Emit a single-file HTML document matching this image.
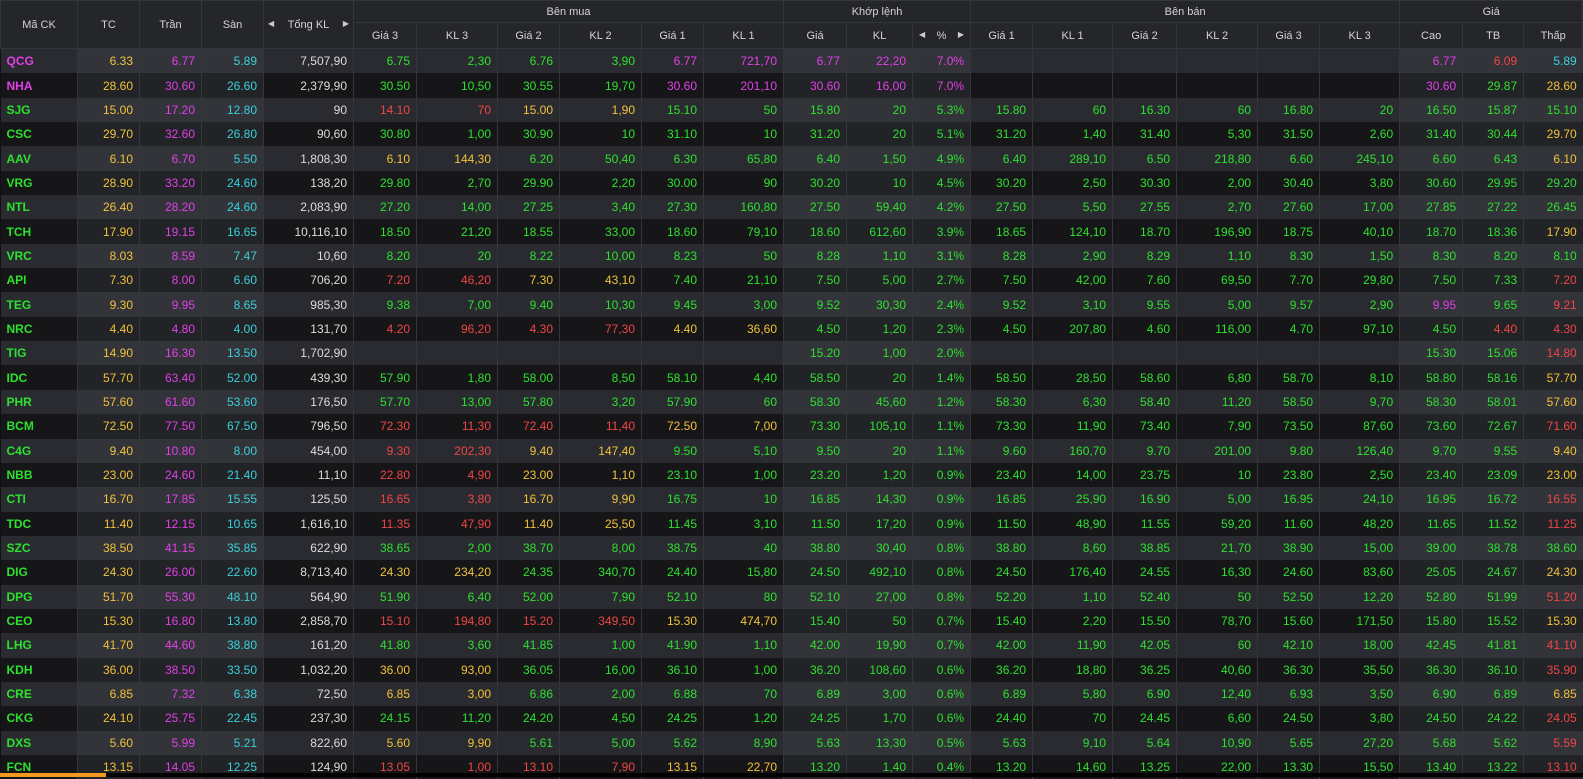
<!DOCTYPE html>
<html><head><meta charset="utf-8">
<style>
html,body{margin:0;padding:0;background:#111113;width:1583px;height:777px;overflow:hidden;font-family:"Liberation Sans",sans-serif}
table{border-collapse:collapse;table-layout:fixed;width:1583px;position:absolute;top:0;left:0}
th{background:#25262a;color:#d4d4d6;font-weight:normal;font-size:11px;border:1px solid #35363b;padding:0;text-align:center;white-space:nowrap}
thead tr.a th{height:21px}
thead tr.b th{height:25px}
tbody tr{height:24.35px}
tbody td{font-size:12px;text-align:right;padding:0 6px 0 0;height:24.35px;border-left:1px solid #35363b;color:#2ee02e;white-space:nowrap;overflow:hidden}
tbody tr:nth-child(odd) td{background:#2a2b30}
tbody tr:nth-child(even) td{background:#161618}
tbody tr:nth-child(odd) td:nth-child(2),tbody tr:nth-child(odd) td:nth-child(3),tbody tr:nth-child(odd) td:nth-child(4),
tbody tr:nth-child(odd) td:nth-child(12),tbody tr:nth-child(odd) td:nth-child(13),tbody tr:nth-child(odd) td:nth-child(14),
tbody tr:nth-child(odd) td:nth-child(21),tbody tr:nth-child(odd) td:nth-child(22),tbody tr:nth-child(odd) td:nth-child(23){background:#33343a}
tbody tr:nth-child(even) td:nth-child(2),tbody tr:nth-child(even) td:nth-child(3),tbody tr:nth-child(even) td:nth-child(4),
tbody tr:nth-child(even) td:nth-child(12),tbody tr:nth-child(even) td:nth-child(13),tbody tr:nth-child(even) td:nth-child(14),
tbody tr:nth-child(even) td:nth-child(21),tbody tr:nth-child(even) td:nth-child(22),tbody tr:nth-child(even) td:nth-child(23){background:#222327}
tbody td:first-child{text-align:left;padding-left:6px;font-weight:bold;border-left:none}
tbody td:nth-child(2){color:#f0c23a}
tbody td:nth-child(3){color:#e040e8}
tbody td:nth-child(4){color:#3ad0d8}
tbody td:nth-child(5){color:#dcdcdc}
td.y{color:#f0c23a!important}td.r{color:#f04545!important}td.p{color:#e040e8!important}td.c{color:#3ad0d8!important}
.arr{font-size:8px;color:#ccc}
.bar{position:absolute;left:0;top:773px;width:106px;height:4px;background:#f39a1e}
.blk{position:absolute;left:106px;top:773px;width:1477px;height:4px;background:#000}
</style></head><body>
<table>
<colgroup>
<col style="width:77px"><col style="width:62px"><col style="width:62px"><col style="width:62px"><col style="width:90px">
<col style="width:63px"><col style="width:81px"><col style="width:62px"><col style="width:82px"><col style="width:62px"><col style="width:80px">
<col style="width:63px"><col style="width:66px"><col style="width:58px">
<col style="width:62px"><col style="width:80px"><col style="width:64px"><col style="width:81px"><col style="width:62px"><col style="width:80px">
<col style="width:63px"><col style="width:61px"><col style="width:59px">
</colgroup>
<thead>
<tr class="a"><th rowspan="2">Mã CK</th><th rowspan="2">TC</th><th rowspan="2">Trần</th><th rowspan="2">Sàn</th><th rowspan="2"><span class="arr" style="float:left;margin-left:4px">◀</span>Tổng KL<span class="arr" style="float:right;margin-right:4px">▶</span></th><th colspan="6">Bên mua</th><th colspan="3">Khớp lệnh</th><th colspan="6">Bên bán</th><th colspan="3">Giá</th></tr>
<tr class="b"><th>Giá 3</th><th>KL 3</th><th>Giá 2</th><th>KL 2</th><th>Giá 1</th><th>KL 1</th><th>Giá</th><th>KL</th><th><span class="arr" style="float:left;margin-left:6px">◀</span>%<span class="arr" style="float:right;margin-right:6px">▶</span></th><th>Giá 1</th><th>KL 1</th><th>Giá 2</th><th>KL 2</th><th>Giá 3</th><th>KL 3</th><th>Cao</th><th>TB</th><th>Thấp</th></tr>
</thead>
<tbody>
<tr><td class="p">QCG</td><td>6.33</td><td>6.77</td><td>5.89</td><td>7,507,90</td><td>6.75</td><td>2,30</td><td>6.76</td><td>3,90</td><td class="p">6.77</td><td class="p">721,70</td><td class="p">6.77</td><td class="p">22,20</td><td class="p">7.0%</td><td></td><td></td><td></td><td></td><td></td><td></td><td class="p">6.77</td><td class="r">6.09</td><td class="c">5.89</td></tr>
<tr><td class="p">NHA</td><td>28.60</td><td>30.60</td><td>26.60</td><td>2,379,90</td><td>30.50</td><td>10,50</td><td>30.55</td><td>19,70</td><td class="p">30.60</td><td class="p">201,10</td><td class="p">30.60</td><td class="p">16,00</td><td class="p">7.0%</td><td></td><td></td><td></td><td></td><td></td><td></td><td class="p">30.60</td><td>29.87</td><td class="y">28.60</td></tr>
<tr><td>SJG</td><td>15.00</td><td>17.20</td><td>12.80</td><td>90</td><td class="r">14.10</td><td class="r">70</td><td class="y">15.00</td><td class="y">1,90</td><td>15.10</td><td>50</td><td>15.80</td><td>20</td><td>5.3%</td><td>15.80</td><td>60</td><td>16.30</td><td>60</td><td>16.80</td><td>20</td><td>16.50</td><td>15.87</td><td>15.10</td></tr>
<tr><td>CSC</td><td>29.70</td><td>32.60</td><td>26.80</td><td>90,60</td><td>30.80</td><td>1,00</td><td>30.90</td><td>10</td><td>31.10</td><td>10</td><td>31.20</td><td>20</td><td>5.1%</td><td>31.20</td><td>1,40</td><td>31.40</td><td>5,30</td><td>31.50</td><td>2,60</td><td>31.40</td><td>30.44</td><td class="y">29.70</td></tr>
<tr><td>AAV</td><td>6.10</td><td>6.70</td><td>5.50</td><td>1,808,30</td><td class="y">6.10</td><td class="y">144,30</td><td>6.20</td><td>50,40</td><td>6.30</td><td>65,80</td><td>6.40</td><td>1,50</td><td>4.9%</td><td>6.40</td><td>289,10</td><td>6.50</td><td>218,80</td><td>6.60</td><td>245,10</td><td>6.60</td><td>6.43</td><td class="y">6.10</td></tr>
<tr><td>VRG</td><td>28.90</td><td>33.20</td><td>24.60</td><td>138,20</td><td>29.80</td><td>2,70</td><td>29.90</td><td>2,20</td><td>30.00</td><td>90</td><td>30.20</td><td>10</td><td>4.5%</td><td>30.20</td><td>2,50</td><td>30.30</td><td>2,00</td><td>30.40</td><td>3,80</td><td>30.60</td><td>29.95</td><td>29.20</td></tr>
<tr><td>NTL</td><td>26.40</td><td>28.20</td><td>24.60</td><td>2,083,90</td><td>27.20</td><td>14,00</td><td>27.25</td><td>3,40</td><td>27.30</td><td>160,80</td><td>27.50</td><td>59,40</td><td>4.2%</td><td>27.50</td><td>5,50</td><td>27.55</td><td>2,70</td><td>27.60</td><td>17,00</td><td>27.85</td><td>27.22</td><td>26.45</td></tr>
<tr><td>TCH</td><td>17.90</td><td>19.15</td><td>16.65</td><td>10,116,10</td><td>18.50</td><td>21,20</td><td>18.55</td><td>33,00</td><td>18.60</td><td>79,10</td><td>18.60</td><td>612,60</td><td>3.9%</td><td>18.65</td><td>124,10</td><td>18.70</td><td>196,90</td><td>18.75</td><td>40,10</td><td>18.70</td><td>18.36</td><td class="y">17.90</td></tr>
<tr><td>VRC</td><td>8.03</td><td>8.59</td><td>7.47</td><td>10,60</td><td>8.20</td><td>20</td><td>8.22</td><td>10,00</td><td>8.23</td><td>50</td><td>8.28</td><td>1,10</td><td>3.1%</td><td>8.28</td><td>2,90</td><td>8.29</td><td>1,10</td><td>8.30</td><td>1,50</td><td>8.30</td><td>8.20</td><td>8.10</td></tr>
<tr><td>API</td><td>7.30</td><td>8.00</td><td>6.60</td><td>706,20</td><td class="r">7.20</td><td class="r">46,20</td><td class="y">7.30</td><td class="y">43,10</td><td>7.40</td><td>21,10</td><td>7.50</td><td>5,00</td><td>2.7%</td><td>7.50</td><td>42,00</td><td>7.60</td><td>69,50</td><td>7.70</td><td>29,80</td><td>7.50</td><td>7.33</td><td class="r">7.20</td></tr>
<tr><td>TEG</td><td>9.30</td><td>9.95</td><td>8.65</td><td>985,30</td><td>9.38</td><td>7,00</td><td>9.40</td><td>10,30</td><td>9.45</td><td>3,00</td><td>9.52</td><td>30,30</td><td>2.4%</td><td>9.52</td><td>3,10</td><td>9.55</td><td>5,00</td><td>9.57</td><td>2,90</td><td class="p">9.95</td><td>9.65</td><td class="r">9.21</td></tr>
<tr><td>NRC</td><td>4.40</td><td>4.80</td><td>4.00</td><td>131,70</td><td class="r">4.20</td><td class="r">96,20</td><td class="r">4.30</td><td class="r">77,30</td><td class="y">4.40</td><td class="y">36,60</td><td>4.50</td><td>1,20</td><td>2.3%</td><td>4.50</td><td>207,80</td><td>4.60</td><td>116,00</td><td>4.70</td><td>97,10</td><td>4.50</td><td class="r">4.40</td><td class="r">4.30</td></tr>
<tr><td>TIG</td><td>14.90</td><td>16.30</td><td>13.50</td><td>1,702,90</td><td></td><td></td><td></td><td></td><td></td><td></td><td>15.20</td><td>1,00</td><td>2.0%</td><td></td><td></td><td></td><td></td><td></td><td></td><td>15.30</td><td>15.06</td><td class="r">14.80</td></tr>
<tr><td>IDC</td><td>57.70</td><td>63.40</td><td>52.00</td><td>439,30</td><td>57.90</td><td>1,80</td><td>58.00</td><td>8,50</td><td>58.10</td><td>4,40</td><td>58.50</td><td>20</td><td>1.4%</td><td>58.50</td><td>28,50</td><td>58.60</td><td>6,80</td><td>58.70</td><td>8,10</td><td>58.80</td><td>58.16</td><td class="y">57.70</td></tr>
<tr><td>PHR</td><td>57.60</td><td>61.60</td><td>53.60</td><td>176,50</td><td>57.70</td><td>13,00</td><td>57.80</td><td>3,20</td><td>57.90</td><td>60</td><td>58.30</td><td>45,60</td><td>1.2%</td><td>58.30</td><td>6,30</td><td>58.40</td><td>11,20</td><td>58.50</td><td>9,70</td><td>58.30</td><td>58.01</td><td class="y">57.60</td></tr>
<tr><td>BCM</td><td>72.50</td><td>77.50</td><td>67.50</td><td>796,50</td><td class="r">72.30</td><td class="r">11,30</td><td class="r">72.40</td><td class="r">11,40</td><td class="y">72.50</td><td class="y">7,00</td><td>73.30</td><td>105,10</td><td>1.1%</td><td>73.30</td><td>11,90</td><td>73.40</td><td>7,90</td><td>73.50</td><td>87,60</td><td>73.60</td><td>72.67</td><td class="r">71.60</td></tr>
<tr><td>C4G</td><td>9.40</td><td>10.80</td><td>8.00</td><td>454,00</td><td class="r">9.30</td><td class="r">202,30</td><td class="y">9.40</td><td class="y">147,40</td><td>9.50</td><td>5,10</td><td>9.50</td><td>20</td><td>1.1%</td><td>9.60</td><td>160,70</td><td>9.70</td><td>201,00</td><td>9.80</td><td>126,40</td><td>9.70</td><td>9.55</td><td class="y">9.40</td></tr>
<tr><td>NBB</td><td>23.00</td><td>24.60</td><td>21.40</td><td>11,10</td><td class="r">22.80</td><td class="r">4,90</td><td class="y">23.00</td><td class="y">1,10</td><td>23.10</td><td>1,00</td><td>23.20</td><td>1,20</td><td>0.9%</td><td>23.40</td><td>14,00</td><td>23.75</td><td>10</td><td>23.80</td><td>2,50</td><td>23.40</td><td>23.09</td><td class="y">23.00</td></tr>
<tr><td>CTI</td><td>16.70</td><td>17.85</td><td>15.55</td><td>125,50</td><td class="r">16.65</td><td class="r">3,80</td><td class="y">16.70</td><td class="y">9,90</td><td>16.75</td><td>10</td><td>16.85</td><td>14,30</td><td>0.9%</td><td>16.85</td><td>25,90</td><td>16.90</td><td>5,00</td><td>16.95</td><td>24,10</td><td>16.95</td><td>16.72</td><td class="r">16.55</td></tr>
<tr><td>TDC</td><td>11.40</td><td>12.15</td><td>10.65</td><td>1,616,10</td><td class="r">11.35</td><td class="r">47,90</td><td class="y">11.40</td><td class="y">25,50</td><td>11.45</td><td>3,10</td><td>11.50</td><td>17,20</td><td>0.9%</td><td>11.50</td><td>48,90</td><td>11.55</td><td>59,20</td><td>11.60</td><td>48,20</td><td>11.65</td><td>11.52</td><td class="r">11.25</td></tr>
<tr><td>SZC</td><td>38.50</td><td>41.15</td><td>35.85</td><td>622,90</td><td>38.65</td><td>2,00</td><td>38.70</td><td>8,00</td><td>38.75</td><td>40</td><td>38.80</td><td>30,40</td><td>0.8%</td><td>38.80</td><td>8,60</td><td>38.85</td><td>21,70</td><td>38.90</td><td>15,00</td><td>39.00</td><td>38.78</td><td>38.60</td></tr>
<tr><td>DIG</td><td>24.30</td><td>26.00</td><td>22.60</td><td>8,713,40</td><td class="y">24.30</td><td class="y">234,20</td><td>24.35</td><td>340,70</td><td>24.40</td><td>15,80</td><td>24.50</td><td>492,10</td><td>0.8%</td><td>24.50</td><td>176,40</td><td>24.55</td><td>16,30</td><td>24.60</td><td>83,60</td><td>25.05</td><td>24.67</td><td class="y">24.30</td></tr>
<tr><td>DPG</td><td>51.70</td><td>55.30</td><td>48.10</td><td>564,90</td><td>51.90</td><td>6,40</td><td>52.00</td><td>7,90</td><td>52.10</td><td>80</td><td>52.10</td><td>27,00</td><td>0.8%</td><td>52.20</td><td>1,10</td><td>52.40</td><td>50</td><td>52.50</td><td>12,20</td><td>52.80</td><td>51.99</td><td class="r">51.20</td></tr>
<tr><td>CEO</td><td>15.30</td><td>16.80</td><td>13.80</td><td>2,858,70</td><td class="r">15.10</td><td class="r">194,80</td><td class="r">15.20</td><td class="r">349,50</td><td class="y">15.30</td><td class="y">474,70</td><td>15.40</td><td>50</td><td>0.7%</td><td>15.40</td><td>2,20</td><td>15.50</td><td>78,70</td><td>15.60</td><td>171,50</td><td>15.80</td><td>15.52</td><td class="y">15.30</td></tr>
<tr><td>LHG</td><td>41.70</td><td>44.60</td><td>38.80</td><td>161,20</td><td>41.80</td><td>3,60</td><td>41.85</td><td>1,00</td><td>41.90</td><td>1,10</td><td>42.00</td><td>19,90</td><td>0.7%</td><td>42.00</td><td>11,90</td><td>42.05</td><td>60</td><td>42.10</td><td>18,00</td><td>42.45</td><td>41.81</td><td class="r">41.10</td></tr>
<tr><td>KDH</td><td>36.00</td><td>38.50</td><td>33.50</td><td>1,032,20</td><td class="y">36.00</td><td class="y">93,00</td><td>36.05</td><td>16,00</td><td>36.10</td><td>1,00</td><td>36.20</td><td>108,60</td><td>0.6%</td><td>36.20</td><td>18,80</td><td>36.25</td><td>40,60</td><td>36.30</td><td>35,50</td><td>36.30</td><td>36.10</td><td class="r">35.90</td></tr>
<tr><td>CRE</td><td>6.85</td><td>7.32</td><td>6.38</td><td>72,50</td><td class="y">6.85</td><td class="y">3,00</td><td>6.86</td><td>2,00</td><td>6.88</td><td>70</td><td>6.89</td><td>3,00</td><td>0.6%</td><td>6.89</td><td>5,80</td><td>6.90</td><td>12,40</td><td>6.93</td><td>3,50</td><td>6.90</td><td>6.89</td><td class="y">6.85</td></tr>
<tr><td>CKG</td><td>24.10</td><td>25.75</td><td>22.45</td><td>237,30</td><td>24.15</td><td>11,20</td><td>24.20</td><td>4,50</td><td>24.25</td><td>1,20</td><td>24.25</td><td>1,70</td><td>0.6%</td><td>24.40</td><td>70</td><td>24.45</td><td>6,60</td><td>24.50</td><td>3,80</td><td>24.50</td><td>24.22</td><td class="r">24.05</td></tr>
<tr><td>DXS</td><td>5.60</td><td>5.99</td><td>5.21</td><td>822,60</td><td class="y">5.60</td><td class="y">9,90</td><td>5.61</td><td>5,00</td><td>5.62</td><td>8,90</td><td>5.63</td><td>13,30</td><td>0.5%</td><td>5.63</td><td>9,10</td><td>5.64</td><td>10,90</td><td>5.65</td><td>27,20</td><td>5.68</td><td>5.62</td><td class="r">5.59</td></tr>
<tr><td>FCN</td><td>13.15</td><td>14.05</td><td>12.25</td><td>124,90</td><td class="r">13.05</td><td class="r">1,00</td><td class="r">13.10</td><td class="r">7,90</td><td class="y">13.15</td><td class="y">22,70</td><td>13.20</td><td>1,40</td><td>0.4%</td><td>13.20</td><td>14,60</td><td>13.25</td><td>22,00</td><td>13.30</td><td>15,50</td><td>13.40</td><td>13.22</td><td class="r">13.10</td></tr>
</tbody>
</table>
<div class="blk"></div><div class="bar"></div>
</body></html>
